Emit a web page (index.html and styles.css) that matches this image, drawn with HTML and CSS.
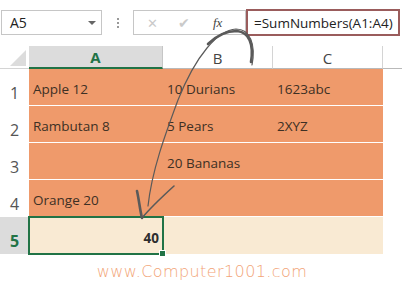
FILE: index.html
```html
<!DOCTYPE html>
<html lang="en">

<head>
    <meta charset="UTF-8">
    <title>SumNumbers</title>
    <link rel="stylesheet" href="styles.css">
</head>

<body>

    <div class="sheet">
        <!-- Formula bar -->
        <div class="formula-bar">
            <div class="name-box">
                <span>A5</span>
                <span class="caret"></span>
            </div>
            <div class="grip">
                <span></span><span></span><span></span>
            </div>
            <div class="fx-box">
                <span class="fx-btn">&#x2715;</span>
                <span class="fx-btn check">&#x2714;</span>
                <span class="fx-label">fx</span>
            </div>
            <div class="formula">=SumNumbers(A1:A4)</div>
        </div>

        <!-- Grid -->
        <div class="grid">
            <div class="corner"><span class="tri"></span></div>
            <div class="col-head active">A</div>
            <div class="col-head">B</div>
            <div class="col-head">C</div>
            <div class="col-head last"></div>

            <div class="row-head">1</div>
            <div class="cell">Apple 12</div>
            <div class="cell">10 Durians</div>
            <div class="cell">1623abc</div>
            <div class="cell blank"></div>

            <div class="row-head">2</div>
            <div class="cell">Rambutan 8</div>
            <div class="cell">5 Pears</div>
            <div class="cell">2XYZ</div>
            <div class="cell blank"></div>

            <div class="row-head">3</div>
            <div class="cell"></div>
            <div class="cell">20 Bananas</div>
            <div class="cell"></div>
            <div class="cell blank"></div>

            <div class="row-head">4</div>
            <div class="cell">Orange 20</div>
            <div class="cell"></div>
            <div class="cell"></div>
            <div class="cell blank"></div>

            <div class="row-head active">5</div>
            <div class="cell result selected">40</div>
            <div class="cell result"></div>
            <div class="cell result"></div>
            <div class="cell blank"></div>
        </div>

        <div class="watermark">www.Computer1001.com</div>

        <!-- hand drawn arrow -->
        <svg class="arrow" width="402" height="283" viewBox="0 0 402 283">
            <path d="M252 65 C256 44 250 29 236 29 C218 30 196 55 178 100 C165 135 152 170 148 206"
                fill="none" stroke="#5a5a5a" stroke-width="1.2" stroke-linecap="round" />
            <path d="M251 62 C254 44 249 32 237 31 C226 31 216 36 208 44"
                fill="none" stroke="#5a5a5a" stroke-width="2.6" stroke-linecap="round" />
            <path d="M137 191 C139 200 140 210 142 218" fill="none" stroke="#5a5a5a"
                stroke-width="2.6" stroke-linecap="round" />
            <path d="M174 186 C163 196 151 207 142 218" fill="none" stroke="#5a5a5a"
                stroke-width="1.6" stroke-linecap="round" />
        </svg>
    </div>

</body>

</html>
```

FILE: styles.css
```css
body {
    margin: 0;
    background-color: white;
    font-family: "Open Sans", Arial, sans-serif;
}

.sheet {
    position: relative;
    width: 402px;
    height: 283px;
    overflow: hidden;
}

/* Formula bar */
.formula-bar {
    display: flex;
    align-items: center;
    height: 27px;
    padding: 9px 0 0 1px;
}

.name-box {
    display: flex;
    justify-content: space-between;
    align-items: center;
    box-sizing: border-box;
    width: 101px;
    height: 25px;
    padding: 0 5px 0 8px;
    border: 1px solid #c6c6c6;
    font-size: 14px;
    color: #222;
}

.caret {
    width: 0;
    height: 0;
    border-left: 4px solid transparent;
    border-right: 4px solid transparent;
    border-top: 4px solid #666;
}

.grip {
    display: flex;
    flex-direction: column;
    align-items: center;
    gap: 2px;
    width: 31px;
}

.grip span {
    width: 2px;
    height: 2px;
    background-color: #999;
}

.fx-box {
    display: flex;
    align-items: center;
    box-sizing: border-box;
    width: 113px;
    height: 25px;
    padding-left: 13px;
    border: 1px solid #c6c6c6;
}

.fx-btn {
    width: 31px;
    font-size: 13px;
    color: #cacaca;
}

.check {
    font-size: 14px;
}

.fx-label {
    margin-left: 4px;
    font-family: "Liberation Serif", serif;
    font-style: italic;
    font-size: 13px;
    color: #444;
}

.formula {
    box-sizing: border-box;
    width: 154px;
    height: 27px;
    padding: 3px 0 0 6px;
    border: 2px solid #9a5c5c;
    font-size: 13.5px;
    color: #222;
    white-space: nowrap;
}

/* Grid */
.grid {
    display: grid;
    grid-template-columns: 29px 134px 110px 110px 19px;
    grid-template-rows: 23px repeat(5, 37px);
    margin-top: 10px;
}

.corner {
    position: relative;
    border-bottom: 1px solid #d4d4d4;
}

.tri {
    position: absolute;
    right: 3px;
    bottom: 2px;
    width: 0;
    height: 0;
    border-left: 16px solid transparent;
    border-bottom: 16px solid #dcdcdc;
}

.col-head {
    display: flex;
    justify-content: center;
    align-items: center;
    padding-top: 1px;
    border-right: 1px solid #d4d4d4;
    border-bottom: 1px solid #b9b9b9;
    font-size: 15px;
    color: #444;
}

.col-head.active {
    background-color: #dcdcdc;
    border-right-color: #c6c6c6;
    border-bottom: 2px solid #217346;
    color: #217346;
    font-weight: bold;
}

.col-head.last {
    border-right: none;
}

.row-head {
    display: flex;
    justify-content: center;
    align-items: flex-end;
    padding-bottom: 2px;
    font-size: 16px;
    color: #555;
}

.row-head.active {
    background-color: #dcdcdc;
    color: #217346;
    font-weight: bold;
}

.cell {
    display: flex;
    align-items: flex-end;
    padding: 0 0 7px 4px;
    background-color: #ef9a6b;
    border-bottom: 1px solid white;
    font-size: 13.5px;
    color: #3d3024;
    white-space: nowrap;
}

.cell.blank {
    background-color: white;
    border-bottom: none;
}

.cell.result {
    background-color: #f9ead3;
    border-bottom: none;
}

.cell.selected {
    position: relative;
    justify-content: flex-end;
    padding-right: 4px;
    outline: 2px solid #217346;
    outline-offset: -1px;
    font-weight: bold;
    color: #2e2e2e;
}

.cell.selected::after {
    content: "";
    position: absolute;
    right: -3px;
    bottom: -3px;
    width: 5px;
    height: 5px;
    background-color: #217346;
    border: 1px solid white;
}

.watermark {
    margin-top: 8px;
    padding-left: 2px;
    text-align: center;
    font-family: "DejaVu Sans", sans-serif;
    font-weight: 200;
    font-size: 16px;
    letter-spacing: 0.4px;
    color: #f2a477;
}

.arrow {
    position: absolute;
    left: 0;
    top: 0;
    pointer-events: none;
}
```
